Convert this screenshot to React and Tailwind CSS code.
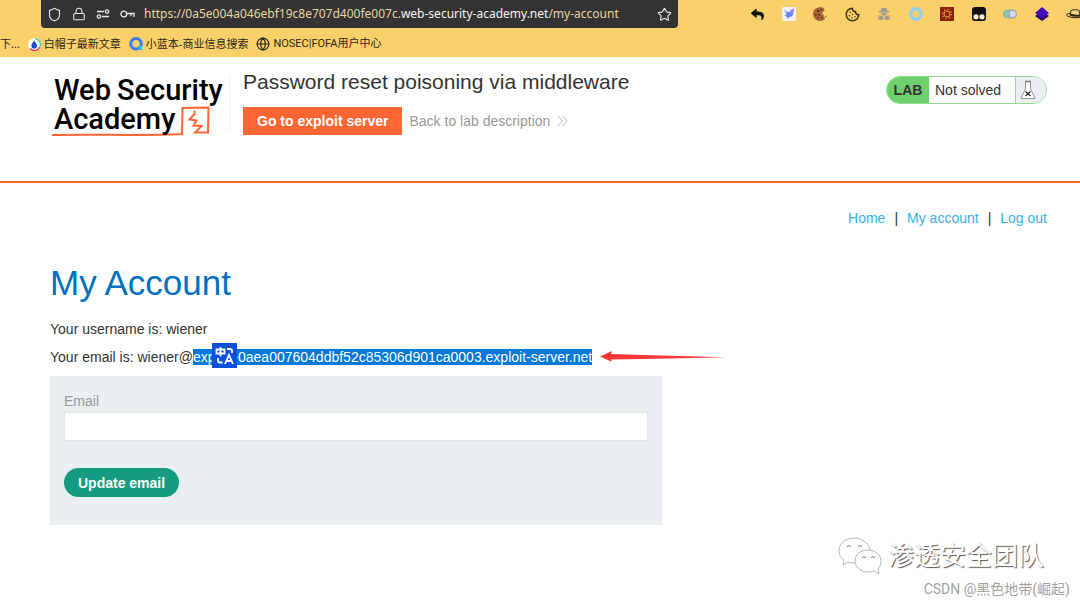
import React, { useState } from "react";
import { FaReply } from "react-icons/fa";
import { Shield, Lock, Star, Globe, Cookie } from "lucide-react";

function PermissionsIcon() {
  return (
    <svg width="14" height="12" viewBox="0 0 14 12" fill="none" stroke="#e8e8e8" strokeWidth="1.3">
      <path d="M1 3.500h7M6 8.500h7" />
      <circle cx="11" cy="3.500" r="1.700" />
      <circle cx="3" cy="8.500" r="1.700" />
    </svg>
  );
}

function KeyIcon() {
  return (
    <svg width="15" height="12" viewBox="0 0 15 12" fill="none" stroke="#e8e8e8" strokeWidth="1.3">
      <circle cx="3.8" cy="6" r="2.9" />
      <path d="M6.7 5.5H14V9M11 5.5v2.7" />
    </svg>
  );
}

function Extensions() {
  return (
    <div className="flex w-[329px] shrink-0 items-center justify-between">
      <button aria-label="Back">
        <FaReply size={13} color="#111" />
      </button>
      <button aria-label="Bird">
        <svg width="14" height="14" viewBox="0 0 14 14">
          <rect width="14" height="14" rx="2" fill="#f2f3ff" />
          <path d="M2 2.500c2 2 4 2.500 5.500 2.500C8 3 10 2.500 12.500 3L11.500 4.500C11.500 8 10 10 7 10.500L4.500 12l.8-2L2 8.500 5 8 3 6.500l2-.3C3.500 5 2.500 4 2 2.500Z" fill="#6684f5" />
          <path d="M7.500 5c1-2 3-3.500 5-3.500L9.500 7Z" fill="#a58af2" />
        </svg>
      </button>
      <button aria-label="Cookie editor">
        <svg width="14" height="14" viewBox="0 0 14 14">
          <path d="M11 1.300A7 7 0 1 0 11.500 12.500L12 10.500 10.500 9.500 11 8 9 7 9.500 5 11.500 4Z" fill="#a8623c" />
          <path d="M4 3h2v2H4ZM7.500 2h1.500v1.500H7.500ZM2 7h1.500v1.500H2ZM5.500 7H7v1.500H5.500ZM4 10.500h1.500V12H4ZM8 10h1.500v1.500H8Z" fill="#5f2a17" />
          <circle cx="13" cy="9.500" r=".8" fill="#a8623c" />
        </svg>
      </button>
      <button aria-label="Cookies">
        <Cookie size={15} color="#3a2f14" strokeWidth={2.4} />
      </button>
      <button aria-label="Incognito">
        <svg width="14" height="14" viewBox="0 0 14 14" fill="#a19c8d">
          <path d="M4.500 1h5l1 3H12v1.500H2V4h1.500ZM4 6h6v1L7 9 4 7ZM1.500 8.500l3.500 0 1.500 2-.5 2.500H1.500ZM12.500 8.500H9L7.500 10.500 8 13h4.500Z" />
        </svg>
      </button>
      <button aria-label="Ring">
        <svg width="14" height="14" viewBox="0 0 14 14">
          <circle cx="7" cy="7" r="5.200" fill="none" stroke="#93cdf0" strokeWidth="3.400" />
        </svg>
      </button>
      <button aria-label="Settings">
        <svg width="14" height="14" viewBox="0 0 14 14" fill="none" stroke="#dc9c37">
          <rect width="14" height="14" fill="#8c2211" stroke="none" />
          <circle cx="7" cy="7" r="3" />
          <circle cx="7" cy="7" r="4.300" strokeWidth="1.500" strokeDasharray="1.300 2.070" />
        </svg>
      </button>
      <button aria-label="Tampermonkey">
        <svg width="14" height="14" viewBox="0 0 14 14">
          <rect width="14" height="14" rx="3" fill="#111" />
          <circle cx="4" cy="9.800" r="2.600" fill="#fff1d0" />
          <circle cx="10" cy="9.800" r="2.600" fill="#fff1d0" />
        </svg>
      </button>
      <button aria-label="Toggle">
        <svg width="14" height="14" viewBox="0 0 14 14">
          <rect x=".5" y="3" width="13" height="8" rx="4" fill="#7fcbae" stroke="#99a6a3" />
          <circle cx="9.700" cy="7" r="3.800" fill="#dcd9f2" stroke="#a29ab5" />
        </svg>
      </button>
      <button aria-label="Layers">
        <svg width="14" height="14" viewBox="0 0 14 14">
          <path d="M7 4 14 9 7 14 0 9Z" fill="#26066d" />
          <path d="M7 0 14 6 7 11.500 0 6Z" fill="#4509b5" />
        </svg>
      </button>
      <button aria-label="Hat">
        <svg width="14" height="14" viewBox="0 0 14 14" fill="none" stroke="#2d2413" strokeWidth="1">
          <path d="M4 7.500 5 3.500c3-1 6-1 8-.3L14 8" fill="#f4d48a" />
          <path d="M4 7.500c3 1.500 6 1.500 10 1" strokeWidth="2" />
          <path d="M4 6.500C0 6.500-.5 8 2 9.300c4 1.700 8 1.700 12 1" />
        </svg>
      </button>
    </div>
  );
}

function Browser() {
  return (
    <div className="h-[57px] overflow-hidden bg-[#fad06b] font-['Noto_Sans','Noto_Sans_CJK_SC',sans-serif]">
      <div className="flex h-7 items-center justify-between pl-[41px]">
        <div className="flex h-7 w-[637px] items-center rounded-b bg-[#333333] px-1.5">
          <div className="flex w-[97px] shrink-0 items-center gap-2.5">
            <Shield size={15} color="#e8e8e8" strokeWidth={1.8} />
            <Lock size={14} color="#e8e8e8" strokeWidth={1.8} />
            <PermissionsIcon />
            <KeyIcon />
          </div>
          <div className="flex-1 whitespace-nowrap text-xs text-[#e9d6a5]">
            https://0a5e004a046ebf19c8e707d400fe007c.
            <span className="text-[#f7f7f7]">web-security-academy.net</span>
            /my-account
          </div>
          <button aria-label="Bookmark this page">
            <Star size={15} color="#e8e8e8" strokeWidth={1.8} />
          </button>
        </div>
        <Extensions />
      </div>
      <div className="flex h-8 items-center gap-2 whitespace-nowrap text-[11px] text-[#2c2514]">
        <a href="#more">下...</a>
        <a href="#articles" className="flex items-center gap-[3px]">
          <svg width="13" height="13" viewBox="0 0 13 13">
            <circle cx="6.500" cy="6.500" r="6.500" fill="#fff" />
            <path d="M7 .6A5.900 5.900 0 0 1 12 8.500" fill="none" stroke="#2fcbbb" strokeWidth="1.200" />
            <path d="M11.800 9A5.900 5.900 0 0 1 2 10.400" fill="none" stroke="#ef335e" strokeWidth="1.400" />
            <path d="M6.200 2.500C7.500 4.500 9 6 9 7.700a2.800 2.800 0 0 1-5.600 0C3.400 6 5 4.500 6.200 2.500Z" fill="#1849d5" />
          </svg>
          白帽子最新文章
        </a>
        <a href="#business" className="flex items-center gap-[3px]">
          <svg width="14" height="14" viewBox="0 0 14 14" fill="none">
            <circle cx="7" cy="6.800" r="5.300" stroke="#397bf5" strokeWidth="3" />
            <path d="M8.500 9h4.500v4h-3Z" fill="#20c8ee" />
          </svg>
          小蓝本-商业信息搜索
        </a>
        <a href="#fofa" className="flex items-center gap-[3px]">
          <Globe size={14} strokeWidth={2} />
          <span className="font-['Roboto','Noto_Sans_CJK_SC',sans-serif]">NOSEC|FOFA用户中心</span>
        </a>
      </div>
    </div>
  );
}

function Logo() {
  return (
    <a
      href="#academy"
      className="relative block w-[178px] shrink-0 pl-[3px] pt-px font-['Roboto',sans-serif] text-[29px] font-medium leading-[29px] text-black"
    >
      <svg className="absolute left-0 top-0" width="178" height="66" viewBox="0 0 178 66" fill="none" stroke="#ff6633">
        <path d="M1 60C45 59 90 61 131 59L131.500 33 157.500 32.500 157 57.500H144L150.500 51 142.500 50.500 145.500 45.500 138.500 44.500 143.500 39V35.500" strokeWidth="2" />
      </svg>
      <span className="relative flex gap-1.5">
        <span>Web</span>
        <span>Security</span>
      </span>
      <span className="relative block">Academy</span>
    </a>
  );
}

function LabHeader() {
  return (
    <header className="flex h-[126px] items-start border-b-2 border-[#ff6633] pl-[51px] pr-[33px]">
      <div className="mt-[18px] flex">
        <Logo />
        <div className="mt-px h-[55px] w-px bg-[#eeeeee]" />
      </div>
      <div className="ml-[13px] mt-2.5 flex-1">
        <h2 className="text-[21px] leading-[30px]">Password reset poisoning via middleware</h2>
        <div className="mt-2.5 flex items-center gap-[7px]">
          <button className="h-7 bg-[#ff6633] px-3.5 text-sm font-bold text-white">
            Go to exploit server
          </button>
          <a href="#description" className="flex items-center gap-[7px] text-sm text-[#999999]">
            Back to lab description
            <svg width="11" height="12" viewBox="0 0 11 12" fill="none" stroke="#b5b5b5">
              <path d="M1 1 5.500 6 1 11M5.500 1 10 6 5.500 11" />
            </svg>
          </a>
        </div>
      </div>
      <div className="mt-[19px] flex h-7 items-center overflow-hidden rounded-full border border-[#92dc90] text-sm">
        <span className="flex h-full w-[42px] items-center justify-center bg-[#6fd06d] text-sm font-bold">LAB</span>
        <p className="w-[86px] pl-1.5">Not solved</p>
        <span className="flex h-full w-[31px] items-center border-l border-[#92dc90] bg-[#eaeff2] pl-1">
          <svg width="16" height="20" viewBox="0 0 16 20" fill="#fff" stroke="#777">
            <path d="M5.500 1.500v7L1 18.500h14L10.500 8.500v-7Z" strokeWidth=".8" />
            <path d="M5 1.500h6" strokeWidth="1.300" />
            <path d="M5.500 11.500 10.500 16M10.500 11.500 5.500 16" stroke="#222" strokeWidth="1.200" />
          </svg>
        </span>
      </div>
    </header>
  );
}

function TranslateBadge() {
  return (
    <svg className="absolute -top-1.5 left-[19px]" width="25" height="25" viewBox="0 0 25 25" fill="none" stroke="#fff" strokeWidth="1.800">
      <rect width="25" height="25" fill="#0a50dc" stroke="none" />
      <path d="M4.500 6.500h8v4h-8ZM8.500 4v9.500" />
      <path d="M15 6h3a2 2 0 0 1 2 2v2M6 15v2.500a2 2 0 0 0 2 2h2.500" />
      <path d="M13 21 17 12l4 9M14.500 18h5" />
    </svg>
  );
}

function Arrow() {
  return (
    <svg className="ml-2 shrink-0" width="127" height="12" viewBox="0 0 127 12" fill="#fb3838">
      <path d="M0 5.500 12 0 11 3 70 4.800 126 6.200 70 7.500 11 8.500 12 11Z" />
    </svg>
  );
}

function Account() {
  const [email, setEmail] = useState("");

  return (
    <main className="pl-[50px] pr-[33px]">
      <nav className="flex justify-end gap-[9px] pt-[25px] text-sm leading-5">
        <a href="#home" className="text-[#38b0e3]">Home</a>
        <span>|</span>
        <a href="#account" className="text-[#38b0e3]">My account</a>
        <span>|</span>
        <a href="#logout" className="text-[#38b0e3]">Log out</a>
      </nav>
      <h1 className="mt-[35px] text-[35px] leading-10 text-[#0070c0]">My Account</h1>
      <p className="mt-3 text-sm leading-7">Your username is: wiener</p>
      <div className="flex h-7 items-center text-sm">
        <p>Your email is: wiener@</p>
        <span className="relative bg-[#0078d7] leading-4 text-white">
          exploit-0aea007604ddbf52c85306d901ca0003.exploit-server.net
          <TranslateBadge />
        </span>
        <Arrow />
      </div>
      <form
        className="mt-[5px] max-w-[612px] bg-[#eaeff2] px-3.5 pb-7 pt-[15px]"
        onSubmit={(e) => e.preventDefault()}
      >
        <label htmlFor="email" className="block text-sm leading-5 text-[#999999]">
          Email
        </label>
        <input
          id="email"
          type="email"
          value={email}
          onChange={(e) => setEmail(e.target.value)}
          className="mt-px block h-[29px] w-full border border-[#e3e8e9] bg-white px-2 text-sm"
        />
        <button className="mt-[27px] h-[29px] rounded-full bg-[#159c80] px-3.5 text-sm font-bold text-white">
          Update email
        </button>
      </form>
    </main>
  );
}

function Watermark() {
  return (
    <div className="pointer-events-none absolute bottom-0 right-2.5 flex flex-col items-end font-['Roboto','Noto_Sans_CJK_SC',sans-serif]">
      <div className="mr-[26px] flex items-center gap-1.5">
        <svg width="44" height="38" viewBox="0 0 44 38" fill="#fff" stroke="#b5b5b5" strokeWidth="1">
          <path d="M16 1C7 1 1 7 1 14c0 4 2 7 5 9l-1 5 5-3c3 1 6 1 9 1 8-1 13-6 13-12S25 1 16 1Z" />
          <path d="M30 13c-8 0-13 5-13 11s6 11 13 11c2 0 4 0 6-1l5 3-1-5c2-2 3-5 3-8 0-6-6-11-13-11Z" />
          <path d="M9 10q2-3 4 0M20 10q2-3 4 0M24 21q2-3 4 0M33 21q2-3 4 0" fill="none" stroke="#777" />
        </svg>
        <span className="text-[26px] leading-9 text-white [text-shadow:1px_1px_1px_#555]">渗透安全团队</span>
      </div>
      <p className="whitespace-nowrap text-sm leading-7 text-[#a2a2a2]">CSDN @黑色地带(崛起)</p>
    </div>
  );
}

export default function App() {
  return (
    <div className="relative min-h-screen overflow-hidden bg-white font-['Liberation_Sans',Arial,sans-serif] text-[#333332]">
      <Browser />
      <LabHeader />
      <Account />
      <Watermark />
    </div>
  );
}
